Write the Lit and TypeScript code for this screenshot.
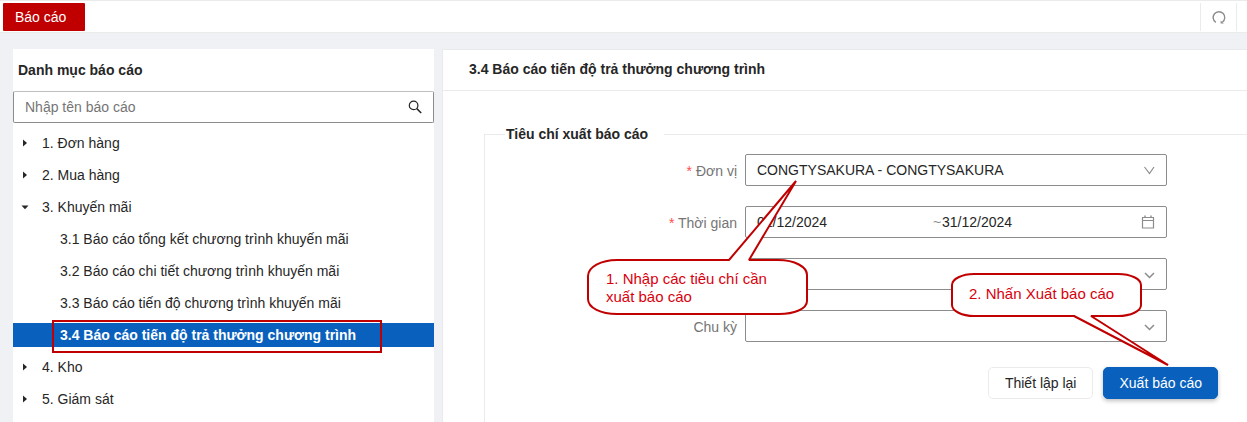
import { LitElement, html, css, svg } from "lit";
import { customElement, state } from "lit/decorators.js";
import { classMap } from "lit/directives/class-map.js";

interface Node {
  label: string;
  children?: string[];
}

const TREE: Node[] = [
  { label: "1. Đơn hàng", children: [] },
  { label: "2. Mua hàng", children: [] },
  {
    label: "3. Khuyến mãi",
    children: [
      "3.1 Báo cáo tổng kết chương trình khuyến mãi",
      "3.2 Báo cáo chi tiết chương trình khuyến mãi",
      "3.3 Báo cáo tiến độ chương trình khuyến mãi",
      "3.4 Báo cáo tiến độ trả thưởng chương trình",
    ],
  },
  { label: "4. Kho", children: [] },
  { label: "5. Giám sát", children: [] },
];

const chevron = svg`<path d="M1.5 3 L6.5 9.5 L11 3" fill="none" stroke="#8c8c8c" stroke-width="1.2"/>`;
const smallChevron = svg`<path d="M2 5 L6.5 9.5 L11 5" fill="none" stroke="#8c8c8c" stroke-width="1.5"/>`;

@customElement("app-root")
export class AppRoot extends LitElement {
  @state() private open = 2;
  @state() private selected = TREE[2].children![3];

  static styles = css`
    :host {
      display: block;
      position: relative;
      min-height: 100vh;
      overflow: hidden;
      background: #f0f1f5;
      color: #262626;
      font: 14px/20px "Liberation Sans", Arial, sans-serif;
    }
    * { box-sizing: border-box; }
    button, input, select { font: inherit; color: inherit; margin: 0; }
    button { cursor: pointer; }
    h1, h2, ul { margin: 0; padding: 0; font-size: 14px; }
    ul { list-style: none; }
    svg { display: block; flex: none; }
    .topbar {
      display: flex;
      justify-content: space-between;
      height: 33px;
      padding: 2px 10px 1px 3px;
      background: #fff;
      border-top: 1px solid #ebebeb;
      border-bottom: 1px solid #ebebeb;
    }
    .tab {
      width: 82px;
      padding: 0 0 0 12px;
      border: 0;
      border-radius: 1px;
      background: #c00000;
      color: #fff;
      text-align: left;
    }
    .refresh {
      display: grid;
      place-items: center;
      width: 37px;
      padding: 0;
      border: solid #ebebeb;
      border-width: 0 1px;
      background: none;
    }
    .page {
      display: grid;
      grid-template-columns: 421px minmax(0, 1fr);
      gap: 8px;
      padding: 16px 0 0 13px;
      min-height: calc(100vh - 33px);
    }
    .side { background: #fff; }
    .side h2 { padding: 11px 5px; }
    .search {
      display: flex;
      align-items: center;
      height: 32px;
      padding: 0 11px;
      border: 1px solid #8c8c8c;
      border-top-color: #bfbfbf;
      border-radius: 2px;
    }
    .search input {
      flex: 1;
      min-width: 0;
      padding: 0;
      border: 0;
      outline: 0;
      background: none;
    }
    .search input::placeholder { color: #757575; opacity: 1; }
    .tree { padding-top: 8px; }
    .branch, .leaf {
      display: flex;
      align-items: center;
      width: 100%;
      height: 24px;
      margin-bottom: 8px;
      padding: 0;
      border: 0;
      background: none;
      text-align: left;
      white-space: nowrap;
    }
    .branch { gap: 13px; padding-left: 8px; }
    .leaf { padding-left: 47px; }
    .leaf.active { background: #0960bd; color: #fff; font-weight: bold; }
    .main { background: #fff; border-left: 1px solid #e8eaec; }
    .main h1 {
      padding: 9px 26px 11px;
      border-top: 1px solid #e8eaec;
      border-bottom: 1px solid #ebebeb;
    }
    .criteria {
      min-width: 0;
      margin: 33px 0 0 41px;
      padding: 10px 80px 0 0;
      border: 1px solid #ebebeb;
      border-right: 0;
      border-bottom: 0;
      min-height: 299px;
    }
    .criteria legend {
      margin-left: 20px;
      padding: 0 16px 0 1px;
      font-weight: bold;
    }
    .rows { display: grid; gap: 20px; }
    .row {
      display: grid;
      grid-template-columns: 252px minmax(0, 1fr);
      gap: 8px;
      align-items: center;
    }
    .row label { text-align: right; color: #757575; padding-top: 2px; }
    .req { color: #ff4d4f; }
    .box {
      display: grid;
      align-items: center;
      height: 32px;
      border: 1px solid #8c8c8c;
      border-radius: 2px;
      background: #fff;
    }
    .box > * { grid-row: 1; grid-column: 1; }
    .box > svg { justify-self: end; margin-right: 11px; pointer-events: none; }
    .box select {
      appearance: none;
      width: 100%;
      height: 30px;
      padding: 0 11px;
      border: 0;
      outline: 0;
      background: none;
    }
    .range {
      display: grid;
      grid-template-columns: 176px 9px minmax(0, 1fr);
      padding: 0 11px;
    }
    .range input { width: 100%; padding: 0; border: 0; outline: 0; background: none; }
    .range span { color: #8c8c8c; }
    .actions {
      display: flex;
      justify-content: flex-end;
      gap: 10px;
      margin-top: 25px;
      margin-right: -51px;
    }
    .btn {
      height: 32px;
      padding: 0 16px;
      border: 1px solid #ebebeb;
      border-radius: 5px;
      background: #fff;
      white-space: nowrap;
    }
    .btn.primary {
      padding: 0 15px;
      border-color: #0960bd;
      background: #0960bd;
      color: #fff;
      box-shadow: 0 2px 4px rgba(0, 0, 0, 0.25);
    }
    .note { position: absolute; pointer-events: none; }
    .note svg { overflow: visible; }
    .note p {
      position: absolute;
      margin: 0;
      color: #d9000d;
      font-size: 15px;
      line-height: 18px;
      white-space: nowrap;
    }
    .frame { left: 52px; top: 320px; width: 330px; height: 33px; border: 2px solid #c00000; }
    .first { left: 587px; top: 180px; }
    .first p { left: 19px; top: 90px; }
    .second { left: 951px; top: 273px; }
    .second p { left: 18px; top: 12px; }
  `;

  private renderBranch(node: Node, i: number) {
    const open = this.open === i;
    return html`<li>
      <button class="branch" aria-expanded=${open} @click=${() => (this.open = open ? -1 : i)}>
        <svg width="8" height="8" viewBox="0 0 8 8" fill="#262626">
          <path d=${open ? "M.5 2.5h7L4 6.2z" : "M2 .5v7L6 4z"} />
        </svg>
        ${node.label}
      </button>
      ${open
        ? html`<ul>
            ${node.children!.map(
              (c) => html`<li>
                <button
                  class=${classMap({ leaf: true, active: c === this.selected })}
                  @click=${() => (this.selected = c)}
                >${c}</button>
              </li>`
            )}
          </ul>`
        : null}
    </li>`;
  }

  render() {
    return html`
      <header class="topbar">
        <button class="tab">Báo cáo</button>
        <button class="refresh" aria-label="Tải lại">
          <svg width="14" height="14" viewBox="0 0 14 14" fill="none" stroke="#8c8c8c" stroke-width="1.4">
            <path d="M3.8 12.4A5.8 5.8 0 1 1 10.4 12.2" />
            <path d="M8.6 10.4v3h3.2z" fill="#8c8c8c" stroke="none" />
          </svg>
        </button>
      </header>
      <div class="page">
        <nav class="side">
          <h2>Danh mục báo cáo</h2>
          <div class="search">
            <input type="text" aria-label="Nhập tên báo cáo" placeholder="Nhập tên báo cáo" />
            <svg width="14" height="14" viewBox="0 0 14 14" fill="none" stroke="#262626">
              <circle cx="5.6" cy="5.4" r="4.3" stroke-width="1.2" />
              <path d="M8.8 8.6l4.4 4.4" stroke-width="1.5" />
            </svg>
          </div>
          <ul class="tree">${TREE.map((n, i) => this.renderBranch(n, i))}</ul>
        </nav>
        <main class="main">
          <h1>3.4 Báo cáo tiến độ trả thưởng chương trình</h1>
          <fieldset class="criteria">
            <legend>Tiêu chí xuất báo cáo</legend>
            <div class="rows">
              <div class="row">
                <label for="unit"><span class="req">*</span> Đơn vị</label>
                <div class="box">
                  <select id="unit"><option>CONGTYSAKURA - CONGTYSAKURA</option></select>
                  <svg width="12" height="12" viewBox="0 0 12 12">${chevron}</svg>
                </div>
              </div>
              <div class="row">
                <label for="from"><span class="req">*</span> Thời gian</label>
                <div class="box">
                  <div class="range">
                    <input id="from" type="text" value="01/12/2024" />
                    <span>~</span>
                    <input type="text" aria-label="Đến ngày" value="31/12/2024" />
                  </div>
                  <svg width="14" height="14" viewBox="0 0 14 14" fill="none" stroke="#8c8c8c">
                    <path d="M1.5 2.5h11v10.5h-11zM1.5 5.5h11" stroke-width="1.2" />
                    <path d="M4 .5v2M10 .5v2" stroke-width="1.4" />
                  </svg>
                </div>
              </div>
              <div class="row">
                <span></span>
                <div class="box">
                  <select aria-label="Tiêu chí"><option></option></select>
                  <svg width="12" height="12" viewBox="0 0 12 12">${smallChevron}</svg>
                </div>
              </div>
              <div class="row">
                <label for="cycle">Chu kỳ</label>
                <div class="box">
                  <select id="cycle"><option></option></select>
                  <svg width="12" height="12" viewBox="0 0 12 12">${smallChevron}</svg>
                </div>
              </div>
            </div>
            <div class="actions">
              <button class="btn">Thiết lập lại</button>
              <button class="btn primary">Xuất báo cáo</button>
            </div>
          </fieldset>
        </main>
      </div>
      <div class="note frame"></div>
      <div class="note first">
        <svg width="222" height="136" viewBox="0 0 222 136">
          <path
            d="M30 80H142L209 1L162 80H191C208 80 220 87 220 95V121C220 129 207 134 192 134H30C14 134 1 128 1 119V96C1 87 14 80 30 80Z"
            fill="#fff" stroke="#c00000" stroke-width="2" stroke-linejoin="bevel"
          />
        </svg>
        <p>1. Nhập các tiêu chí cần<br />xuất báo cáo</p>
      </div>
      <div class="note second">
        <svg width="218" height="94" viewBox="0 0 218 94">
          <path
            d="M23 1H167C180 1 190 6 190 12V32C190 38 180 43 167 43H140L217 92L123 43H23C11 43 1 38 1 32V12C1 6 11 1 23 1Z"
            fill="#fff" stroke="#c00000" stroke-width="2" stroke-linejoin="bevel"
          />
        </svg>
        <p>2. Nhấn Xuất báo cáo</p>
      </div>
    `;
  }
}
